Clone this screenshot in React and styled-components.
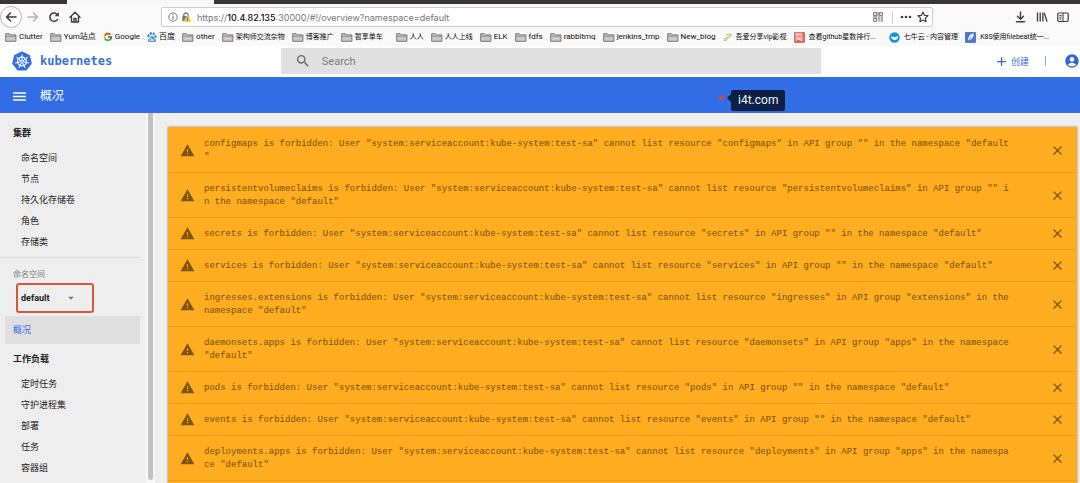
import React from 'react'
import styled, { createGlobalStyle } from 'styled-components'
import { FcGoogle } from 'react-icons/fc'
import { SiBaidu } from 'react-icons/si'
import { MdWarning, MdClose, MdSearch, MdMenu, MdAdd, MdAccountCircle, MdArrowDropDown } from 'react-icons/md'

const GlobalStyle = createGlobalStyle`
    * {
        box-sizing: border-box;
    }
    body {
        margin: 0;
        font-family: Roboto, "Noto Sans CJK SC", sans-serif;
        color: #212121;
        overflow: hidden;
    }
    button, input, select {
        font-family: inherit;
        padding: 0;
        border: 0;
        background: none;
    }
    a {
        color: inherit;
        text-decoration: none;
    }
    svg {
        display: block;
        flex-shrink: 0;
    }
`
const Page = styled.div`
    height: 100vh;
    display: flex;
    flex-direction: column;
    background-color: #eeeeee;
`

// browser chrome
const TabStrip = styled.div`
    height: 4px;
    flex-shrink: 0;
    padding-left: 67px;
    background-color: #393536;
`
const Tab = styled.div`
    width: 147px;
    height: 4px;
    background-color: #f5f6f7;
`
const Toolbar = styled.div`
    height: 26px;
    flex-shrink: 0;
    display: flex;
    align-items: center;
    background-color: #f9f9fa;
    color: #4a4a4f;
`
const NavButtons = styled.div`
    width: 161px;
    display: flex;
    align-items: center;
    gap: 8px;
`
const ToolButton = styled.button`
    display: flex;
    align-items: center;
    justify-content: center;
    width: 13px;
    height: 20px;
    color: ${props => props.$muted ? '#b5b5b8' : '#3d3d40'};
`
const BackButton = styled(ToolButton)`
    width: 22px;
    height: 22px;
    border: 1px solid #b9b9bb;
    border-radius: 50%;
    background-color: #fdfdfd;
    margin-right: -4px;
`
const AddressBar = styled.div`
    flex: 0 1 772px;
    height: 20px;
    display: flex;
    align-items: center;
    gap: 4px;
    padding: 0 3px 0 6px;
    background-color: white;
    border: 1px solid #cccccc;
    border-radius: 2px;
`
const Url = styled.div`
    flex: 1;
    padding-left: 1px;
    font-family: Inter, sans-serif;
    font-size: 9px;
    color: #77777a;
    white-space: nowrap;
    b {
        font-weight: 500;
        color: #0c0c0d;
    }
`
const BarLine = styled.div`
    width: 1px;
    height: 13px;
    margin: 0 2px 0 5px;
    background-color: #d0d0d0;
`
const RightTools = styled.div`
    flex: 1;
    display: flex;
    align-items: center;
    justify-content: flex-end;
    gap: 8px;
    padding-right: 11px;
`
const Bookmarks = styled.nav`
    height: 16px;
    flex-shrink: 0;
    display: flex;
    align-items: center;
    gap: 7px;
    padding: 0 0 2px 5px;
    background-color: #f9f9fa;
    overflow: hidden;
`
const Bookmark = styled.a`
    display: flex;
    align-items: center;
    gap: ${props => props.$site ? 4 : 2}px;
    margin-left: ${props => props.$apart ? 6 : 0}px;
    font-size: ${props => props.$small ? 7 : 8}px;
    line-height: 14px;
    color: #0c0c0d;
    white-space: nowrap;
`
const Badge = styled.span`
    width: 11px;
    height: 11px;
    display: flex;
    align-items: center;
    justify-content: center;
    border-radius: 1px;
    font-size: 8px;
    line-height: 11px;
    color: white;
    background-color: #e2695a;
`

// dashboard
const Header = styled.header`
    height: 31px;
    flex-shrink: 0;
    display: flex;
    align-items: flex-start;
    background-color: white;
`
const Brand = styled.a`
    width: 26%;
    height: 30px;
    display: flex;
    align-items: center;
    gap: 8px;
    padding-left: 12px;
    font-family: "DejaVu Sans Mono", monospace;
    font-size: 12px;
    font-weight: bold;
    color: #3a72d3;
`
const SearchBox = styled.label`
    width: 50%;
    height: 26px;
    margin-top: 2px;
    display: flex;
    align-items: center;
    gap: 11px;
    padding-left: 14px;
    background-color: #e0e0e0;
    color: #666666;
`
const SearchInput = styled.input`
    flex: 1;
    outline: none;
    font-size: 11px;
    color: #333333;
    &::placeholder {
        color: #7c7c7c;
        opacity: 1;
    }
`
const HeaderActions = styled.div`
    flex: 1;
    height: 30px;
    display: flex;
    align-items: center;
    justify-content: flex-end;
    color: #3367d6;
`
const CreateButton = styled.button`
    display: flex;
    align-items: center;
    gap: 2px;
    padding-right: 16px;
    font-size: 9px;
    color: #3367d6;
`
const ActionLine = styled.div`
    width: 1px;
    height: 10px;
    margin-right: 18px;
    background-color: #8ba7dc;
`
const AccountButton = styled.button`
    color: #3367d6;
`
const TitleBar = styled.div`
    position: relative;
    height: 36px;
    flex-shrink: 0;
    display: flex;
    align-items: center;
    gap: 12px;
    padding: 2px 0 0 11px;
    background-color: #326de6;
    color: white;
`
const MenuButton = styled.button`
    color: white;
`
const PageTitle = styled.h1`
    margin: 0;
    font-size: 12px;
    line-height: 20px;
    font-weight: normal;
`
const Note = styled.div`
    position: absolute;
    left: 731px;
    top: 13px;
    height: 21px;
    padding: 0 7px;
    border-radius: 2px;
    font-size: 12px;
    line-height: 21px;
    color: #f0f3fa;
    background-color: #0c2047;
    &::before {
        content: "";
        position: absolute;
        left: -4px;
        top: 4px;
        border: 4px solid transparent;
        border-left: 0;
        border-right-color: #0c2047;
    }
    &::after {
        content: "";
        position: absolute;
        left: -12px;
        top: 5px;
        width: 5px;
        height: 5px;
        border-radius: 50%;
        background-color: #c9484f;
    }
`
const Body = styled.div`
    flex: 1;
    min-height: 0;
    display: flex;
`
const Sidebar = styled.nav`
    width: 146px;
    flex-shrink: 0;
    padding: 7px 6px 0 0;
    overflow: hidden;
`
const Track = styled.div`
    width: 9px;
    flex-shrink: 0;
    padding: 0 2px 3px;
    background-color: #f8f8f8;
`
const Thumb = styled.div`
    height: 100%;
    border-radius: 0 0 3px 3px;
    background-color: #c1c1c1;
`
const GroupTitle = styled.h2`
    margin: 0 0 2px 13px;
    font-size: 9px;
    line-height: 26px;
    font-weight: bold;
`
const NavList = styled.ul`
    margin: 0;
    padding: 0 0 0 21px;
    list-style: none;
    font-size: 9px;
    line-height: 21px;
`
const Divider = styled.div`
    height: 1px;
    margin: 4px 0 8px;
    background-color: #dcdcdc;
`
const FieldLabel = styled.label`
    display: block;
    padding-left: 13px;
    font-size: 8px;
    line-height: 17px;
    color: #7a7a7a;
`
const SelectFrame = styled.div`
    width: 78px;
    height: 30px;
    margin: 0 0 3px 16px;
    display: flex;
    align-items: center;
    padding-left: 3px;
    border: 2px solid #d9553b;
    border-radius: 3px;
`
const NamespaceSelect = styled.select`
    appearance: none;
    width: 43px;
    outline: none;
    font-size: 9px;
    font-weight: bold;
    color: #212121;
`
const ActiveLink = styled.a`
    display: block;
    margin: 0 0 2px 5px;
    padding-left: 8px;
    font-size: 9px;
    line-height: 28px;
    color: #326de6;
    background-color: #dfdfdf;
`
const Main = styled.main`
    flex: 1;
    min-width: 0;
    padding: 14px 3px 0 13px;
    overflow: hidden;
`
const ErrorPanel = styled.section`
    padding: 1px 0 16px;
    background-color: #ffad20;
    box-shadow: 0 0 2px rgba(0, 0, 0, 0.5);
`
const ErrorRow = styled.div`
    display: flex;
    align-items: center;
    padding: 8px 12px;
    border-bottom: 1px solid #ec9f1c;
    color: #7d540c;
`
const ErrorText = styled.p`
    flex: 1;
    margin: 2px 0 0 9px;
    font-family: "Liberation Mono", monospace;
    font-size: 9px;
    line-height: 13px;
    line-break: anywhere;
    color: #7b4d05;
    span {
        display: block;
        max-width: 149ch;
    }
`
const CloseButton = styled.button`
    display: flex;
    height: 13px;
    align-items: center;
    color: #7d540c;
`

const FolderIcon = () => (
  <svg width="12" height="11" viewBox="0 0 12 11">
    <path d="M.7 9.3V1.7h3.6l1 1.2h5.6v6.4z" fill="#c9c9c9" stroke="#777" />
    <path d="M1 4.2h9.8" stroke="#8c8c8c" />
  </svg>
)

const LeafIcon = () => (
  <svg width="9" height="11" viewBox="0 0 12 11" fill="none" stroke="#8bc34a" strokeWidth="1.3">
    <path d="M1 7c2 1 5 0 6-3M4 2.5c2-1.5 5-1.5 7-1-1 3-3 5-6 4M1 9.5c2 0 4-.5 5-2" />
  </svg>
)

const CloudIcon = () => (
  <svg width="11" height="11" viewBox="0 0 11 11">
    <circle cx="5.5" cy="5.5" r="5.2" fill="#1795db" />
    <path d="M2 3.5c1 2 6 2 7.2 0-.2 3-1.4 4.5-3.6 4.5S2.2 6.5 2 3.5z" fill="white" />
    <path d="M4.2 3l.8 1.5h1.4L7 3" fill="none" stroke="#1795db" />
  </svg>
)

const FeatherIcon = () => (
  <svg width="11" height="11" viewBox="0 0 11 11">
    <rect x="0" y="0" width="11" height="11" rx="1" fill="#4b7cc9" />
    <path d="M3 9c0-4 2-7 5.5-7.5C9 4.5 7 7.5 4 8z" fill="white" />
    <path d="M2.5 10L6.5 4.5" stroke="#4b7cc9" strokeWidth=".7" />
  </svg>
)

const ShieldIcons = () => (
  <svg width="24" height="12" viewBox="0 0 24 12">
    <circle cx="5" cy="6" r="4.2" fill="none" stroke="#77777a" />
    <path d="M5 5.2V8.5M5 3.2v1.2" stroke="#77777a" strokeWidth="1.2" />
    <path d="M15.8 5V4c0-2.7 4.2-2.7 4.2 0v1" fill="none" stroke="#737373" strokeWidth="1.3" />
    <rect x="14.3" y="5" width="7" height="5.5" rx=".8" fill="#737373" />
    <path d="M19.5 4.2L23.7 11h-8.4z" fill="#f2c230" stroke="white" strokeWidth=".4" />
    <path d="M19.5 6.5v2.2M19.5 9.3v.8" stroke="#5c4a10" strokeWidth=".8" />
  </svg>
)

const QrIcon = () => (
  <svg width="10" height="10" viewBox="0 0 10 10" fill="none" stroke="#858585">
    <rect width="10" height="10" fill="#dedede" stroke="none" />
    <path d="M.5.5h3v3h-3zM6.5.5h3v3h-3zM.5 6.5h3v3h-3zM5 0v4M0 5h4M5 5h2M8 5h2M5 7h2M8 7h2M6 9h1M8 9h2" />
  </svg>
)

const KubernetesLogo = () => {
  const spokes = [0, 1, 2, 3, 4, 5, 6].map(i => i * 360 / 7)
  return (
    <svg width="20" height="20" viewBox="0 0 40 40">
      <path
        d="M20 2.5L34.5 9.5L38 25L28 37.5H12L2 25L5.5 9.5Z"
        fill="#326de6"
        stroke="#326de6"
        strokeWidth="3"
        strokeLinejoin="round"
      />
      <g fill="none" stroke="white">
        <circle cx="20" cy="21" r="8.8" strokeWidth="2.4" />
        {spokes.map(a => (
          <path key={a} d="M20 18V7.5" strokeWidth="2" strokeLinecap="round" transform={`rotate(${a} 20 21)`} />
        ))}
        <circle cx="20" cy="21" r="2" strokeWidth="1.6" />
      </g>
    </svg>
  )
}

const bookmarks = [
  { text: 'Clutter' },
  { text: 'Yum站点' },
  { text: 'Google', icon: <FcGoogle size={10} /> },
  { text: '百度', icon: <SiBaidu size={10} color="#3b86d8" /> },
  { text: 'other' },
  { text: '架构师交流杂物', small: true },
  { text: '博客推广', small: true },
  { text: '暂享单车', small: true },
  { text: '人人', small: true, apart: true },
  { text: '人人上线', small: true },
  { text: 'ELK' },
  { text: 'fdfs' },
  { text: 'rabbitmq' },
  { text: 'jenkins_tmp' },
  { text: 'New_blog' },
  { text: '吾爱分享vip影视', icon: <LeafIcon />, small: true, site: true },
  { text: '查看github星数排行...', icon: <Badge>简</Badge>, small: true, site: true },
  { text: '七牛云 - 内容管理', icon: <CloudIcon />, small: true, site: true, apart: true },
  { text: 'K8S使用filebeat统一...', icon: <FeatherIcon />, small: true, site: true },
]

const clusterLinks = ['命名空间', '节点', '持久化存储卷', '角色', '存储类']
const workloadLinks = ['定时任务', '守护进程集', '部署', '任务', '容器组']

const errors = [
  { name: 'configmaps' },
  { name: 'persistentvolumeclaims' },
  { name: 'secrets' },
  { name: 'services' },
  { name: 'ingresses', group: 'extensions' },
  { name: 'daemonsets', group: 'apps' },
  { name: 'pods' },
  { name: 'events' },
  { name: 'deployments', group: 'apps' },
]

const errorMessage = ({ name, group }) =>
  `${group ? `${name}.${group}` : name} is forbidden: User "system:serviceaccount:kube-system:test-sa" cannot list resource "${name}" in API group "${group || ''}" in the namespace "default"`

const Browser = () => {
  return (
    <>
      <TabStrip><Tab /></TabStrip>
      <Toolbar>
        <NavButtons>
          <BackButton aria-label="Back">
            <svg width="12" height="12" viewBox="0 0 12 12" fill="none" stroke="currentColor" strokeWidth="1.5" strokeLinecap="round" strokeLinejoin="round">
              <path d="M11 6H1.5M5.5 2l-4 4 4 4" />
            </svg>
          </BackButton>
          <ToolButton $muted aria-label="Forward">
            <svg width="12" height="12" viewBox="0 0 12 12" fill="none" stroke="currentColor" strokeWidth="1.5" strokeLinecap="round" strokeLinejoin="round">
              <path d="M1 6h9.5M6.5 2l4 4-4 4" />
            </svg>
          </ToolButton>
          <ToolButton aria-label="Reload">
            <svg width="12" height="12" viewBox="0 0 12 12" fill="none" stroke="currentColor" strokeWidth="1.5">
              <path d="M9.8 8A4.2 4.2 0 1 1 9.5 3.7" />
              <path d="M10.8 1v4.2H6.6z" fill="currentColor" stroke="none" />
            </svg>
          </ToolButton>
          <ToolButton aria-label="Home">
            <svg width="12" height="12" viewBox="0 0 12 12" fill="none" stroke="currentColor" strokeWidth="1.4" strokeLinejoin="round" strokeLinecap="round">
              <path d="M1 6.2l5-5 5 5M2.5 5.5V11h7V5.5M5 11V7.5h2V11" />
            </svg>
          </ToolButton>
        </NavButtons>
        <AddressBar>
          <ShieldIcons />
          <Url>https://<b>10.4.82.135</b>:30000/#!/overview?namespace=default</Url>
          <QrIcon />
          <BarLine />
          <ToolButton aria-label="Page actions">
            <svg width="12" height="4" viewBox="0 0 12 4" fill="currentColor">
              <circle cx="2" cy="2" r="1.3" /><circle cx="6" cy="2" r="1.3" /><circle cx="10" cy="2" r="1.3" />
            </svg>
          </ToolButton>
          <ToolButton aria-label="Bookmark this page">
            <svg width="12" height="12" viewBox="0 0 12 12" fill="none" stroke="currentColor" strokeWidth="1.2" strokeLinejoin="round">
              <path d="M6 1l1.5 3.3 3.5.4-2.6 2.4.7 3.6L6 8.900l-3.100 1.800.7-3.600L1 4.700l3.500-.4z" />
            </svg>
          </ToolButton>
        </AddressBar>
        <RightTools>
          <ToolButton aria-label="Downloads">
            <svg width="11" height="12" viewBox="0 0 11 12" fill="none" stroke="currentColor" strokeWidth="1.4" strokeLinecap="round">
              <path d="M5.5 1v7M2.5 5.3l3 3 3-3M1.5 10.8h8" />
            </svg>
          </ToolButton>
          <ToolButton aria-label="Library">
            <svg width="12" height="12" viewBox="0 0 12 12" fill="none" stroke="currentColor" strokeWidth="1.3">
              <path d="M1.5 1.5v9M4.2 1.5v9M6.9 1.5v9M8.3 2l2.7 8.5" />
            </svg>
          </ToolButton>
          <ToolButton aria-label="Sidebars">
            <svg width="12" height="11" viewBox="0 0 12 11" fill="none" stroke="currentColor">
              <rect x=".8" y="1" width="10.4" height="8.5" rx="1.2" strokeWidth="1.2" />
              <path d="M6 1v8.5M2.5 3.5h2M2.5 5.3h2M2.5 7.1h2" />
            </svg>
          </ToolButton>
        </RightTools>
      </Toolbar>
      <Bookmarks>
        {bookmarks.map(item => (
          <Bookmark key={item.text} href="#" $small={item.small} $site={item.site} $apart={item.apart}>
            {item.icon || <FolderIcon />}
            {item.text}
          </Bookmark>
        ))}
      </Bookmarks>
    </>
  )
}

const App = () => {
  return (
    <Page>
      <GlobalStyle />
      <Browser />
      <Header>
        <Brand href="#">
          <KubernetesLogo />
          kubernetes
        </Brand>
        <SearchBox>
          <MdSearch size={16} />
          <SearchInput type="text" placeholder="Search" aria-label="Search" />
        </SearchBox>
        <HeaderActions>
          <CreateButton><MdAdd size={15} />创建</CreateButton>
          <ActionLine />
          <AccountButton aria-label="Account"><MdAccountCircle size={16} /></AccountButton>
        </HeaderActions>
      </Header>
      <TitleBar>
        <MenuButton aria-label="Menu"><MdMenu size={17} /></MenuButton>
        <PageTitle>概况</PageTitle>
        <Note>i4t.com</Note>
      </TitleBar>
      <Body>
        <Sidebar>
          <GroupTitle>集群</GroupTitle>
          <NavList>
            {clusterLinks.map(text => <li key={text}><a href="#">{text}</a></li>)}
          </NavList>
          <Divider />
          <FieldLabel htmlFor="namespace">命名空间</FieldLabel>
          <SelectFrame>
            <NamespaceSelect id="namespace">
              <option>default</option>
            </NamespaceSelect>
            <MdArrowDropDown size={14} color="#777777" />
          </SelectFrame>
          <ActiveLink href="#">概况</ActiveLink>
          <GroupTitle>工作负载</GroupTitle>
          <NavList>
            {workloadLinks.map(text => <li key={text}><a href="#">{text}</a></li>)}
          </NavList>
        </Sidebar>
        <Track><Thumb /></Track>
        <Main>
          <ErrorPanel>
            {errors.map(error => (
              <ErrorRow key={error.name}>
                <MdWarning size={15} />
                <ErrorText><span>{errorMessage(error)}</span></ErrorText>
                <CloseButton aria-label="Dismiss"><MdClose size={15} /></CloseButton>
              </ErrorRow>
            ))}
          </ErrorPanel>
        </Main>
      </Body>
    </Page>
  )
}

export default App
